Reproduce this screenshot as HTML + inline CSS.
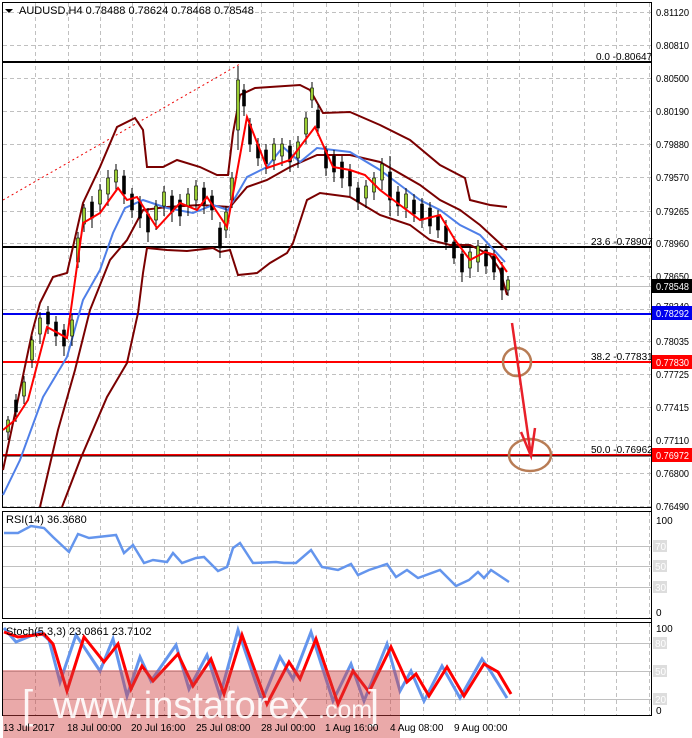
<!DOCTYPE html>
<html><head><meta charset="utf-8"><style>
html,body{margin:0;padding:0;background:#fff;}
svg{display:block;font-family:"Liberation Sans",sans-serif;}
</style></head><body>
<svg width="692" height="738" viewBox="0 0 692 738" xmlns="http://www.w3.org/2000/svg">
<rect width="692" height="738" fill="#fff"/>
<g stroke="#c0c0c0" stroke-dasharray="4,3" stroke-width="1" fill="none">
<path d="M35.5,3V507M68.5,3V507M100.5,3V507M132.5,3V507M164.5,3V507M197.5,3V507M229.5,3V507M261.5,3V507M293.5,3V507M326.5,3V507M358.5,3V507M390.5,3V507M423.5,3V507M455.5,3V507M487.5,3V507M519.5,3V507M552.5,3V507M584.5,3V507M616.5,3V507M649.5,3V507"/>
<path d="M35.5,512V618M68.5,512V618M100.5,512V618M132.5,512V618M164.5,512V618M197.5,512V618M229.5,512V618M261.5,512V618M293.5,512V618M326.5,512V618M358.5,512V618M390.5,512V618M423.5,512V618M455.5,512V618M487.5,512V618M519.5,512V618M552.5,512V618M584.5,512V618M616.5,512V618M649.5,512V618"/>
<path d="M35.5,623V715M68.5,623V715M100.5,623V715M132.5,623V715M164.5,623V715M197.5,623V715M229.5,623V715M261.5,623V715M293.5,623V715M326.5,623V715M358.5,623V715M390.5,623V715M423.5,623V715M455.5,623V715M487.5,623V715M519.5,623V715M552.5,623V715M584.5,623V715M616.5,623V715M649.5,623V715"/>
<path d="M3,12.5H651M3,45.5H651M3,78.5H651M3,111.5H651M3,144.5H651M3,177.5H651M3,211.5H651M3,243.5H651M3,276.5H651M3,309.5H651M3,341.5H651M3,374.5H651M3,407.5H651M3,440.5H651M3,473.5H651M3,506.5H651"/>
</g>
<g fill="none" stroke="#000" stroke-width="1">
<rect x="2.5" y="2.5" width="649" height="505"/>
<rect x="2.5" y="511.5" width="649" height="107"/>
<rect x="2.5" y="622.5" width="649" height="93"/>
</g>
<g stroke="#c0c0c0" stroke-width="1">
<line x1="3" y1="546.5" x2="651" y2="546.5"/><line x1="3" y1="566.5" x2="651" y2="566.5"/><line x1="3" y1="587.5" x2="651" y2="587.5"/>
<line x1="3" y1="643.5" x2="651" y2="643.5"/><line x1="3" y1="671.5" x2="651" y2="671.5"/><line x1="3" y1="699.5" x2="651" y2="699.5"/>
<line x1="3" y1="286.5" x2="651" y2="286.5"/>
</g>
<polyline points="3,200 240,64" fill="none" stroke="#e00" stroke-width="1" stroke-dasharray="2,3"/>
<line x1="3" y1="62" x2="651" y2="62" stroke="#000" stroke-width="2"/>
<line x1="3" y1="247" x2="651" y2="247" stroke="#000" stroke-width="2"/>
<line x1="3" y1="314" x2="651" y2="314" stroke="#0000ee" stroke-width="2"/>
<line x1="3" y1="362" x2="651" y2="362" stroke="#f00" stroke-width="2"/>
<line x1="3" y1="455" x2="651" y2="455" stroke="#f00" stroke-width="2"/>
<line x1="3" y1="456" x2="651" y2="456" stroke="#000" stroke-width="1"/>
<g fill="none" stroke="#7a0000" stroke-width="2">
<polyline points="3,470 20,390 32,333 40,303 53,277 67,273 83,203 100,167 117,127 135,118 143,130 147,167 163,167 177,160 200,167 217,175 228,175 233,133 240,95 255,88 300,85 310,90 323,113 350,112 380,125 410,140 440,165 465,178 470,200 490,205 507,207"/>
<polyline points="62,507 80,460 107,397 127,363 138,313 143,273 147,248 167,250 187,251 213,248 220,252 230,250 238,275 257,273 270,263 287,253 293,243 307,200 320,193 350,197 380,215 410,225 430,240 450,245 470,245 490,255 500,270 507,295"/>
<polyline points="40,507 58,430 75,370 90,310 110,260 127,240 143,210 167,207 200,205 230,207 247,187 267,180 290,167 317,155 350,155 380,162 420,185 440,200 460,210 480,225 507,250"/>
</g>
<polyline fill="none" stroke="#4f7fe8" stroke-width="2" points="3,495 20,460 43,397 67,357 83,300 100,270 113,233 125,208 143,200 167,208 193,213 213,205 228,210 247,177 267,167 283,147 300,162 317,148 350,152 380,170 400,185 420,200 440,210 460,225 480,235 505,262"/>
<!-- candles -->
<path stroke="#000" stroke-width="1" fill="none" d="M8,416V440M16,394V422M24,376V404M32,336V368M40,312V344M48,306V334M56,316V346M64,324V356M72,314V346M78,232V268M84,204V232M92,196V228M100,184V212M108,170V206M116,164V192M124,170V204M132,188V218M140,196V228M148,208V242M156,200V230M164,186V216M172,190V222M180,194V226M188,188V216M196,180V210M204,182V214M212,190V220M220,222V258M226,206V238M232,172V208M238,66V150M244,84V116M250,118V152M258,138V166M266,144V174M274,138V170M282,138V166M290,140V172M298,136V168M306,112V144M312,82V108M318,104V136M326,146V176M334,150V182M342,156V188M350,164V196M358,182V210M366,180V208M374,172V200M382,158V190M390,156V216M398,186V216M406,188V218M414,194V222M422,198V228M430,202V234M438,210V238M446,220V250M454,236V264M462,248V282M470,246V278M478,240V272M486,244V274M494,250V280M502,262V300M508,276V296"/>
<g stroke="#000" stroke-width=".6">
<g fill="#9acd32">
<rect x="6.5" y="420" width="3" height="12"/><rect x="22.5" y="382" width="3" height="14"/><rect x="30.5" y="340" width="3" height="20"/><rect x="38.5" y="318" width="3" height="16"/><rect x="70.5" y="320" width="3" height="16"/><rect x="76.5" y="238" width="3" height="24"/><rect x="82.5" y="208" width="3" height="16"/><rect x="98.5" y="190" width="3" height="14"/><rect x="106.5" y="178" width="3" height="16"/><rect x="114.5" y="170" width="3" height="12"/><rect x="154.5" y="206" width="3" height="14"/><rect x="162.5" y="192" width="3" height="14"/><rect x="186.5" y="194" width="3" height="12"/><rect x="194.5" y="186" width="3" height="14"/><rect x="224.5" y="212" width="3" height="18"/><rect x="230.5" y="178" width="3" height="22"/><rect x="236.5" y="80" width="3" height="50"/><rect x="272.5" y="144" width="3" height="16"/><rect x="280.5" y="144" width="3" height="12"/><rect x="296.5" y="142" width="3" height="16"/><rect x="304.5" y="118" width="3" height="16"/><rect x="310.5" y="88" width="3" height="12"/><rect x="364.5" y="186" width="3" height="12"/><rect x="372.5" y="178" width="3" height="14"/><rect x="380.5" y="164" width="3" height="16"/><rect x="404.5" y="194" width="3" height="14"/><rect x="468.5" y="252" width="3" height="16"/><rect x="476.5" y="246" width="3" height="16"/><rect x="506.5" y="280" width="3" height="10"/>
</g>
<g fill="#000">
<rect x="14.5" y="400" width="3" height="12"/><rect x="46.5" y="312" width="3" height="12"/><rect x="54.5" y="322" width="3" height="14"/><rect x="62.5" y="330" width="3" height="16"/><rect x="90.5" y="202" width="3" height="16"/><rect x="122.5" y="176" width="3" height="18"/><rect x="130.5" y="194" width="3" height="16"/><rect x="138.5" y="202" width="3" height="16"/><rect x="146.5" y="214" width="3" height="18"/><rect x="170.5" y="196" width="3" height="16"/><rect x="178.5" y="200" width="3" height="16"/><rect x="202.5" y="188" width="3" height="16"/><rect x="210.5" y="196" width="3" height="14"/><rect x="218.5" y="228" width="3" height="20"/><rect x="242.5" y="90" width="3" height="16"/><rect x="248.5" y="124" width="3" height="20"/><rect x="256.5" y="144" width="3" height="14"/><rect x="264.5" y="150" width="3" height="14"/><rect x="288.5" y="146" width="3" height="16"/><rect x="316.5" y="110" width="3" height="18"/><rect x="324.5" y="150" width="3" height="18"/><rect x="332.5" y="156" width="3" height="16"/><rect x="340.5" y="162" width="3" height="16"/><rect x="348.5" y="170" width="3" height="16"/><rect x="356.5" y="188" width="3" height="14"/><rect x="388.5" y="172" width="3" height="28"/><rect x="396.5" y="192" width="3" height="14"/><rect x="412.5" y="200" width="3" height="14"/><rect x="420.5" y="204" width="3" height="16"/><rect x="428.5" y="208" width="3" height="18"/><rect x="436.5" y="216" width="3" height="14"/><rect x="444.5" y="226" width="3" height="16"/><rect x="452.5" y="242" width="3" height="16"/><rect x="460.5" y="254" width="3" height="18"/><rect x="484.5" y="250" width="3" height="16"/><rect x="492.5" y="256" width="3" height="16"/><rect x="500.5" y="268" width="3" height="22"/>
</g></g>
<polyline fill="none" stroke="#f00" stroke-width="2" points="3,430 15,420 28,400 47,327 67,338 83,223 100,213 118,188 127,200 137,197 157,228 180,203 197,210 207,197 227,227 247,117 267,168 290,160 315,127 333,167 350,170 365,175 380,190 400,205 420,220 440,215 455,240 470,260 485,252 495,255 507,272"/>
<g fill="none">
<ellipse cx="517" cy="362" rx="14" ry="14" stroke="#b87c55" stroke-width="2.5"/>
<ellipse cx="530" cy="455" rx="21" ry="16" stroke="#b87c55" stroke-width="2.5"/>
<polyline points="512,323 531,456" stroke="#e8202a" stroke-width="2.5"/>
<polyline points="521,432 531,456 535,428" stroke="#e8202a" stroke-width="2.5"/>
</g>
<polyline fill="none" stroke="#6495ed" stroke-width="2.5" points="4,533 18,533 31,526 44,528 53,537 69,552 78,534 89,538 107,536 116,535 124,553 133,545 144,563 153,560 167,562 173,553 182,563 196,558 204,557 218,571 227,567 233,548 240,543 253,563 276,562 284,563 296,563 311,550 322,567 338,570 351,564 358,575 369,570 387,564 396,577 407,570 418,578 440,570 456,586 469,580 478,572 484,578 491,570 509,582"/>
<polyline fill="none" stroke="#6495ed" stroke-width="3" points="4,628 16,642 40,632 49,640 60,682 76,635 100,671 113,639 127,696 140,657 151,681 176,645 189,689 207,655 220,696 238,630 262,701 280,657 293,679 311,632 333,701 351,664 364,701 387,644 400,691 411,671 424,701 442,666 460,698 482,659 491,672 507,698"/>
<polyline fill="none" stroke="#f00" stroke-width="3" points="4,632 18,637 44,634 53,644 67,691 84,637 104,662 118,644 131,689 142,666 153,681 178,654 193,686 211,659 224,694 242,635 267,704 289,662 300,679 316,639 338,704 353,671 369,692 391,647 407,682 416,674 429,696 447,667 464,696 484,664 498,672 511,694"/>
<g font-size="11" fill="#000">
<path d="M5,9 h8 l-4,4 z" fill="#000"/>
<text x="19" y="14">AUDUSD,H4  0.78488 0.78624 0.78468 0.78548</text>
<text x="6" y="523">RSI(14) 36.3680</text>
<text x="6" y="635">Stoch(5,3,3) 23.0861 23.7102</text>
<text x="596" y="60" font-size="10">0.0 -0.80647</text>
<text x="591" y="245" font-size="10">23.6 -0.78907</text>
<text x="591" y="360" font-size="10">38.2 -0.77831</text>
<text x="591" y="453" font-size="10">50.0 -0.76962</text>
</g>
<line x1="651.5" y1="2" x2="651.5" y2="716" stroke="#000"/>
<g font-size="10" fill="#000">
<text x="656" y="16" textLength="33" lengthAdjust="spacingAndGlyphs">0.81120</text><text x="656" y="49" textLength="33" lengthAdjust="spacingAndGlyphs">0.80810</text><text x="656" y="82" textLength="33" lengthAdjust="spacingAndGlyphs">0.80500</text>
<text x="656" y="115" textLength="33" lengthAdjust="spacingAndGlyphs">0.80190</text><text x="656" y="148" textLength="33" lengthAdjust="spacingAndGlyphs">0.79880</text><text x="656" y="181" textLength="33" lengthAdjust="spacingAndGlyphs">0.79570</text>
<text x="656" y="215" textLength="33" lengthAdjust="spacingAndGlyphs">0.79265</text><text x="656" y="247" textLength="33" lengthAdjust="spacingAndGlyphs">0.78960</text><text x="656" y="280" textLength="33" lengthAdjust="spacingAndGlyphs">0.78650</text>
<text x="656" y="310" textLength="33" lengthAdjust="spacingAndGlyphs">0.78340</text><text x="656" y="345" textLength="33" lengthAdjust="spacingAndGlyphs">0.78035</text><text x="656" y="378" textLength="33" lengthAdjust="spacingAndGlyphs">0.77725</text>
<text x="656" y="411" textLength="33" lengthAdjust="spacingAndGlyphs">0.77415</text><text x="656" y="444" textLength="33" lengthAdjust="spacingAndGlyphs">0.77110</text><text x="656" y="477" textLength="33" lengthAdjust="spacingAndGlyphs">0.76800</text>
<text x="656" y="510" textLength="33" lengthAdjust="spacingAndGlyphs">0.76490</text>
<text x="656" y="524">100</text><text x="656" y="616">0</text>
<text x="656" y="632">100</text><text x="656" y="714">0</text>
</g>
<g font-size="10">
<rect x="653" y="540" width="14" height="12" fill="#ddd"/><text x="655" y="550" fill="#fff">70</text>
<rect x="653" y="560" width="14" height="12" fill="#ddd"/><text x="655" y="570" fill="#fff">50</text>
<rect x="653" y="581" width="14" height="12" fill="#ddd"/><text x="655" y="591" fill="#fff">30</text>
<rect x="653" y="637" width="14" height="12" fill="#ddd"/><text x="655" y="647" fill="#fff">80</text>
<rect x="653" y="665" width="14" height="12" fill="#ddd"/><text x="655" y="675" fill="#fff">50</text>
<rect x="653" y="693" width="14" height="12" fill="#ddd"/><text x="655" y="703" fill="#fff">20</text>
</g>
<g font-size="10">
<rect x="652" y="279" width="40" height="14" fill="#000"/><text x="656" y="290" fill="#fff" textLength="33" lengthAdjust="spacingAndGlyphs">0.78548</text>
<rect x="652" y="306" width="40" height="14" fill="#0000ee"/><text x="656" y="317" fill="#fff" textLength="33" lengthAdjust="spacingAndGlyphs">0.78292</text>
<rect x="652" y="355" width="40" height="14" fill="#f00"/><text x="656" y="366" fill="#fff" textLength="33" lengthAdjust="spacingAndGlyphs">0.77830</text>
<rect x="652" y="448" width="40" height="14" fill="#f00"/><text x="656" y="459" fill="#fff" textLength="33" lengthAdjust="spacingAndGlyphs">0.76972</text>
</g>
<rect x="3" y="670" width="397" height="68" fill="#d04040" fill-opacity="0.45"/>
<g fill="#fff" fill-opacity="0.9">
<text x="22" y="718" font-size="40">[</text>
<text x="53" y="718" font-size="38">www.instaforex</text>
<text x="318" y="718" font-size="25">.com</text>
<text x="368" y="718" font-size="40">]</text>
</g>
<g font-size="10" fill="#000">
<text x="3" y="731">13 Jul 2017</text><text x="67" y="731">18 Jul 00:00</text><text x="131" y="731">20 Jul 16:00</text>
<text x="196" y="731">25 Jul 08:00</text><text x="261" y="731">28 Jul 00:00</text><text x="325" y="731">1 Aug 16:00</text>
<text x="390" y="731">4 Aug 08:00</text><text x="454" y="731">9 Aug 00:00</text>
</g>
</svg>
</body></html>
